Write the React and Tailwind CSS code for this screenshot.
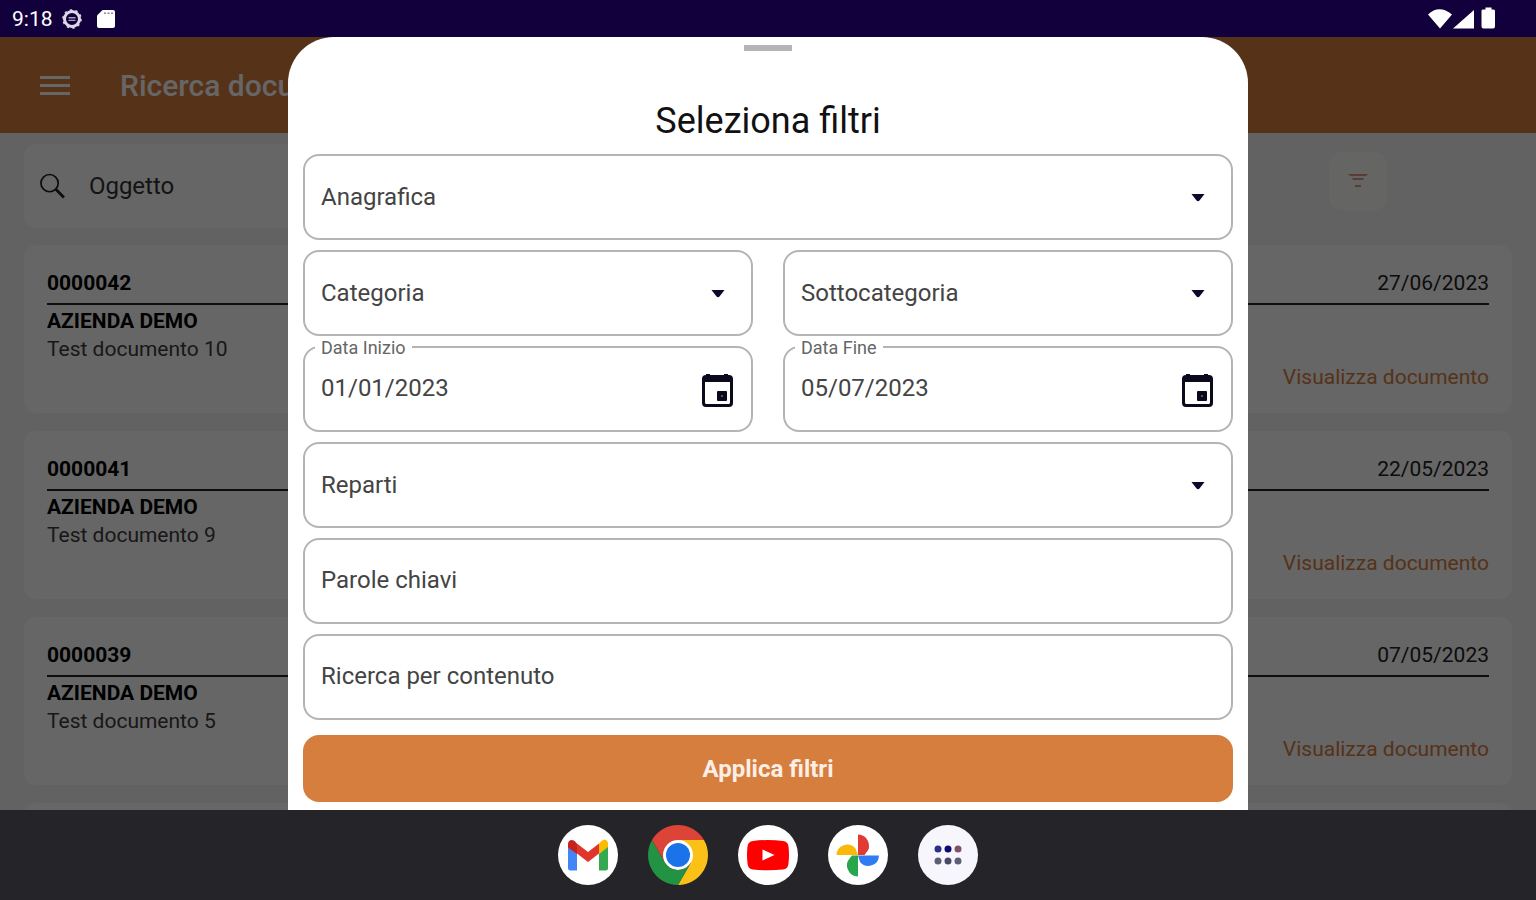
import React from "react";

const documents = [
  { id: "0000042", company: "AZIENDA DEMO", title: "Test documento 10", date: "27/06/2023" },
  { id: "0000041", company: "AZIENDA DEMO", title: "Test documento 9", date: "22/05/2023" },
  { id: "0000039", company: "AZIENDA DEMO", title: "Test documento 5", date: "07/05/2023" },
];

function StatusBar() {
  return (
    <div className="flex h-[37px] shrink-0 items-center justify-between bg-[#12003c] pr-10 pl-3 text-white">
      <div className="flex items-center">
        <span className="w-[50px] text-[21px] leading-6">9:18</span>
        <svg viewBox="0 0 20 20" className="size-5" fill="none">
          <circle cx="10" cy="10" r="7.500" stroke="#dcd8e6" strokeWidth="3" />
          <circle cx="10" cy="10" r="9" stroke="#dcd8e6" strokeWidth="1.600" strokeDasharray="2.400 3.300" />
          <path d="M6.500 8.800h7M6.500 11.400h7" stroke="#a9a2c0" strokeWidth="1.400" />
        </svg>
        <svg viewBox="0 0 20 20" className="ml-[14px] size-5" fill="#fff">
          <path d="M6.500 1H17a2 2 0 0 1 2 2v14a2 2 0 0 1-2 2H3a2 2 0 0 1-2-2V6.500z" />
          <path d="M8 4.200h2M11.500 4.200h2M15 4.200h2" stroke="#8d86a8" strokeWidth="1.400" />
        </svg>
      </div>
      <svg viewBox="0 0 70 24" className="h-6 w-[70px]" fill="#fff">
        <path d="M2 7.500Q13 -3 26 7.500L14 21.500z" />
        <path d="M27 21.500L48 3v18.500z" />
        <path d="M57.500 2.500h2V.500h6v2h2a1.500 1.500 0 0 1 1.500 1.500v15.500a2 2 0 0 1-2 2h-9.500a2 2 0 0 1-2-2V4a1.500 1.500 0 0 1 2-1.500z" />
      </svg>
    </div>
  );
}

function DocumentCard({ doc }) {
  return (
    <article className="h-[168px] shrink-0 rounded-xl bg-white px-[23px] pt-6 text-[21px] leading-7 text-[#222]">
      <div className="mb-[2px] flex justify-between border-b-2 border-[#222] pb-[6px]">
        <strong className="font-bold text-black">{doc.id}</strong>
        <span>{doc.date}</span>
      </div>
      <p className="font-bold text-black">{doc.company}</p>
      <p className="text-[#3c3c3c]">{doc.title}</p>
      <div className="text-right">
        <a href="#documento" className="text-[#d67e3d]">Visualizza documento</a>
      </div>
    </article>
  );
}

function DocumentsPage() {
  return (
    <div className="flex h-full flex-col bg-[#f5f5f8]">
      <header className="flex h-24 shrink-0 items-center gap-[50px] bg-[#d67e3d] px-10 text-white">
        <button type="button" aria-label="Menu" className="flex w-[30px] flex-col gap-[5px]">
          <span className="h-[3px] bg-white" />
          <span className="h-[3px] bg-white" />
          <span className="h-[3px] bg-white" />
        </button>
        <h1 className="text-[30px] font-medium">Ricerca documenti</h1>
      </header>
      <div className="flex shrink-0 items-start px-6 pt-[11px]">
        <label className="flex h-[84px] flex-1 items-center gap-6 rounded-xl bg-white px-4">
          <svg viewBox="0 0 26 26" className="size-[26px]" fill="none" stroke="#222">
            <circle cx="10" cy="10" r="9" strokeWidth="1.800" />
            <path d="M16.500 16.500L25 25" strokeWidth="3" />
          </svg>
          <input
            type="text"
            aria-label="Oggetto"
            placeholder="Oggetto"
            className="w-full bg-transparent text-[24px] outline-none placeholder:text-[#333]"
          />
        </label>
        <div className="flex w-[308px] justify-center pt-2">
          <button type="button" aria-label="Filtri" className="flex size-[58px] items-center justify-center rounded-xl bg-[#fcfcfa]">
            <svg viewBox="0 0 20 14" className="h-[14px] w-5" fill="#d99a80">
              <path d="M0 0h20l-2 2H2zM4 4h12l-1 2H5zM7 11h6v2H7z" />
            </svg>
          </button>
        </div>
      </div>
      <main className="flex flex-col gap-[18px] px-6 pt-[17px]">
        {documents.map((doc) => (
          <DocumentCard key={doc.id} doc={doc} />
        ))}
        <div className="h-[168px] shrink-0 rounded-xl bg-white" />
      </main>
    </div>
  );
}

const control =
  "h-full w-full appearance-none rounded-2xl border-2 border-[#b4b4b4] bg-white px-4 text-[24px] text-[#444] outline-none placeholder:text-[#444]";

function SelectField({ label }) {
  return (
    <div className="relative h-[86px]">
      <select aria-label={label} className={control}>
        <option>{label}</option>
      </select>
      <svg viewBox="0 0 14 8" className="pointer-events-none absolute top-10 right-7 h-2 w-[14px]" fill="#0c0a28">
        <path d="M0.500 0h13L8.500 6.500q-1.500 1.500-3 0z" />
      </svg>
    </div>
  );
}

function TextField({ label }) {
  return (
    <div className="h-[86px]">
      <input type="text" aria-label={label} placeholder={label} className={control + " pb-[2px]"} />
    </div>
  );
}

function DateField({ id, label, value }) {
  return (
    <div className="relative h-[86px]">
      <input id={id} type="text" defaultValue={value} className={control + " pb-[2px]"} />
      <label htmlFor={id} className="absolute -top-2 left-3 bg-white px-[6px] text-[18px] leading-5 text-[#666]">
        {label}
      </label>
      <button type="button" aria-label={"Scegli " + label} className="absolute top-7 right-5">
        <svg viewBox="0 0 32 34" className="h-[34px] w-8" fill="#0b0a1c">
          <path
            fillRule="evenodd"
            d="M5 0h4v1h14V0h4v1h1a4 4 0 0 1 4 4v24a4 4 0 0 1-4 4H5a4 4 0 0 1-4-4V5a4 4 0 0 1 4-4zM4 8v20.500A1.500 1.500 0 0 0 5.500 30h22a1.500 1.500 0 0 0 1.500-1.500V8z"
          />
          <rect x="16" y="17" width="10" height="10" rx="1" />
          <rect x="20" y="21" width="2" height="2" fill="#555" />
        </svg>
      </button>
    </div>
  );
}

function FilterSheet() {
  return (
    <section
      role="dialog"
      aria-labelledby="filter-title"
      className="flex h-full w-5/8 flex-col rounded-t-[46px] bg-white px-[15px] pt-2"
    >
      <div className="h-[6px] w-12 shrink-0 self-center bg-[#b5b5b5]" />
      <h2 id="filter-title" className="mt-[49px] text-center text-[36px] leading-[42px] text-[#111]">
        Seleziona filtri
      </h2>
      <form className="mt-3 flex flex-col" onSubmit={(e) => e.preventDefault()}>
        <div className="grid grid-cols-2 gap-x-[30px] gap-y-[10px]">
          <div className="col-span-2"><SelectField label="Anagrafica" /></div>
          <SelectField label="Categoria" />
          <SelectField label="Sottocategoria" />
          <DateField id="start" label="Data Inizio" value="01/01/2023" />
          <DateField id="end" label="Data Fine" value="05/07/2023" />
          <div className="col-span-2"><SelectField label="Reparti" /></div>
          <div className="col-span-2"><TextField label="Parole chiavi" /></div>
          <div className="col-span-2"><TextField label="Ricerca per contenuto" /></div>
        </div>
        <button type="submit" className="mt-[15px] h-[67px] rounded-2xl bg-[#d67e3d] text-[24px] font-bold text-[#fbeee6]">
          Applica filtri
        </button>
      </form>
    </section>
  );
}

function GmailIcon() {
  return (
    <svg viewBox="0 0 60 60" className="size-[60px]">
      <circle cx="30" cy="30" r="30" fill="#fff" />
      <path d="M10 21v22a2.500 2.500 0 0 0 2.500 2.500H19V27z" fill="#4285f4" />
      <path d="M41 27v18.500h6.500A2.500 2.500 0 0 0 50 43V21z" fill="#34a853" />
      <path d="M41 18.500V29l9-7v-3.500c0-4.200-4-4.800-6.500-2.500z" fill="#fbbc04" />
      <path d="M19 28.500V18.500l11 8.500 11-8.500v10L30 37z" fill="#e0352b" />
      <path d="M10 19v3.500l9 6.500V18.500L16.500 16C14 14 10 15 10 19z" fill="#c5221f" />
    </svg>
  );
}

function ChromeIcon() {
  return (
    <svg viewBox="0 0 60 60" className="size-[60px]">
      <path d="M30 30L4.020 15A30 30 0 0 1 55.980 15L30 15z" fill="#db4437" />
      <path d="M30 15h25.980A30 30 0 0 1 30 60L43 37.500z" fill="#fbc116" />
      <path d="M4.020 15L17 37.500A15 15 0 0 0 43 37.500L30 60A30 30 0 0 1 4.020 15z" fill="#229342" />
      <path d="M4.020 15L17 37.500L30 30L30 15z" fill="#db4437" />
      <circle cx="30" cy="30" r="15" fill="#fff" />
      <circle cx="30" cy="30" r="12" fill="#1a73e8" />
    </svg>
  );
}

function YoutubeIcon() {
  return (
    <svg viewBox="0 0 60 60" className="size-[60px]">
      <circle cx="30" cy="30" r="30" fill="#fff" />
      <path d="M15 16q15-2 30 0 5 .5 5.500 5.500 1 8.500 0 17-.5 5.500-5.500 6-15 1.500-30 0-5-.5-5.500-6-1-8.500 0-17Q10 16.500 15 16z" fill="#f00" />
      <path d="M24.500 24.500v11l12-5.500z" fill="#fff" />
    </svg>
  );
}

function PhotosIcon() {
  return (
    <svg viewBox="0 0 60 60" className="size-[60px]">
      <circle cx="30" cy="30" r="30" fill="#fff" />
      <path d="M30 9.500a11 11 0 0 1 8 18.500l-1.500 2H30z" fill="#e23b33" />
      <path d="M51 30.500a10.700 10.700 0 0 1-19 6.500l-2-6.500z" fill="#2f7df0" />
      <path d="M30 51.500a11 11 0 0 1-8-18.500l2-2.500h6z" fill="#27a64b" />
      <path d="M8.500 30a10.700 10.700 0 0 1 19-6.500l2.500 6.500z" fill="#fbb808" />
    </svg>
  );
}

function AppsIcon() {
  return (
    <svg viewBox="0 0 60 60" className="size-[60px]">
      <circle cx="30" cy="30" r="30" fill="#f8f6fd" />
      <circle cx="20" cy="24" r="3.500" fill="#2b2f86" />
      <circle cx="30" cy="24" r="3.500" fill="#0c0a72" />
      <circle cx="40" cy="24" r="3.500" fill="#80506c" />
      <circle cx="20" cy="36" r="3.500" fill="#5d5d78" />
      <circle cx="30" cy="36" r="3.500" fill="#48486a" />
      <circle cx="40" cy="36" r="3.500" fill="#5d5d78" />
    </svg>
  );
}

const apps = [
  { name: "Gmail", Icon: GmailIcon },
  { name: "Chrome", Icon: ChromeIcon },
  { name: "YouTube", Icon: YoutubeIcon },
  { name: "Foto", Icon: PhotosIcon },
  { name: "App", Icon: AppsIcon },
];

export default function App() {
  return (
    <div className="flex h-screen flex-col overflow-hidden font-['Roboto',sans-serif]">
      <StatusBar />
      <div className="relative min-h-0 flex-1 overflow-hidden">
        <DocumentsPage />
        <div className="absolute inset-0 flex justify-center bg-black/60">
          <FilterSheet />
        </div>
      </div>
      <nav className="flex h-[90px] shrink-0 items-center justify-center gap-[30px] bg-[#252429]">
        {apps.map(({ name, Icon }) => (
          <button key={name} type="button" aria-label={name} className="rounded-full">
            <Icon />
          </button>
        ))}
      </nav>
    </div>
  );
}
